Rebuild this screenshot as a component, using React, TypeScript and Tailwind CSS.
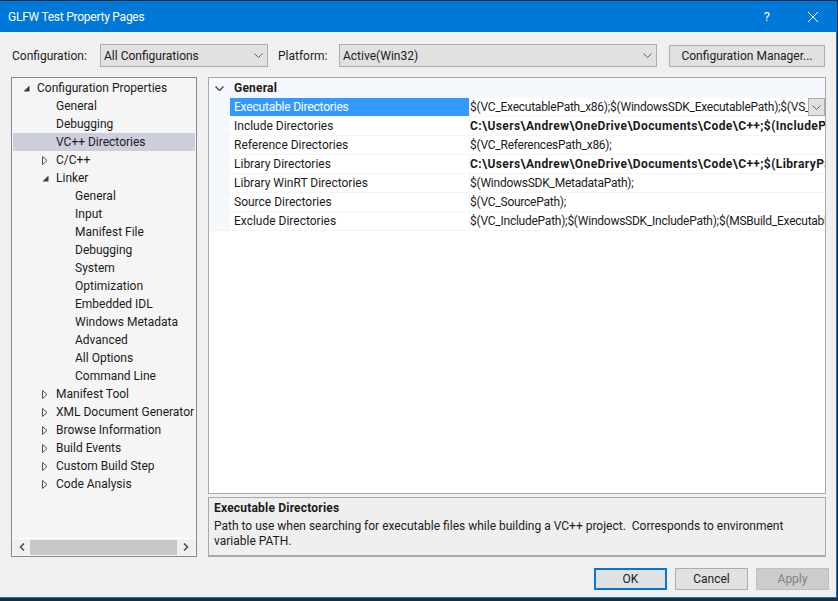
import React from 'react';

type Node = { label: string; depth: number; arrow?: 'open' | 'closed'; selected?: boolean };

const tree: Node[] = [
  { label: 'Configuration Properties', depth: 0, arrow: 'open' },
  { label: 'General', depth: 1 },
  { label: 'Debugging', depth: 1 },
  { label: 'VC++ Directories', depth: 1, selected: true },
  { label: 'C/C++', depth: 1, arrow: 'closed' },
  { label: 'Linker', depth: 1, arrow: 'open' },
  { label: 'General', depth: 2 },
  { label: 'Input', depth: 2 },
  { label: 'Manifest File', depth: 2 },
  { label: 'Debugging', depth: 2 },
  { label: 'System', depth: 2 },
  { label: 'Optimization', depth: 2 },
  { label: 'Embedded IDL', depth: 2 },
  { label: 'Windows Metadata', depth: 2 },
  { label: 'Advanced', depth: 2 },
  { label: 'All Options', depth: 2 },
  { label: 'Command Line', depth: 2 },
  { label: 'Manifest Tool', depth: 1, arrow: 'closed' },
  { label: 'XML Document Generator', depth: 1, arrow: 'closed' },
  { label: 'Browse Information', depth: 1, arrow: 'closed' },
  { label: 'Build Events', depth: 1, arrow: 'closed' },
  { label: 'Custom Build Step', depth: 1, arrow: 'closed' },
  { label: 'Code Analysis', depth: 1, arrow: 'closed' },
];

const props = [
  { name: 'Executable Directories', value: '$(VC_ExecutablePath_x86);$(WindowsSDK_ExecutablePath);$(VS_ExecutablePath);$(Path)', selected: true },
  { name: 'Include Directories', value: 'C:\\Users\\Andrew\\OneDrive\\Documents\\Code\\C++;$(IncludePath)', bold: true },
  { name: 'Reference Directories', value: '$(VC_ReferencesPath_x86);' },
  { name: 'Library Directories', value: 'C:\\Users\\Andrew\\OneDrive\\Documents\\Code\\C++;$(LibraryPath)', bold: true },
  { name: 'Library WinRT Directories', value: '$(WindowsSDK_MetadataPath);' },
  { name: 'Source Directories', value: '$(VC_SourcePath);' },
  { name: 'Exclude Directories', value: '$(VC_IncludePath);$(WindowsSDK_IncludePath);$(MSBuild_ExecutablePath);$(VC_LibraryPath_x86)' },
];

const Chevron = ({ w = 9, thick = false }: { w?: number; thick?: boolean }) => (
  <svg width={w} height={(w + 1) / 2} viewBox={`0 0 ${w} ${(w + 1) / 2}`} fill="none" stroke={thick ? '#505050' : '#606060'} strokeWidth={thick ? 1.5 : 1}>
    <path d={`M0.5 0.5 L${w / 2} ${w / 2} L${w - 0.5} 0.5`} />
  </svg>
);

const TreeArrow = ({ kind }: { kind: 'open' | 'closed' }) =>
  kind === 'open' ? (
    <svg width="7" height="7" viewBox="0 0 7 7"><path d="M6.5 0.5 V6.5 H0.5 Z" fill="#3c3c3c" /></svg>
  ) : (
    <svg width="6" height="9" viewBox="0 0 6 9" fill="none" stroke="#505050"><path d="M0.5 0.5 L5 4.5 L0.5 8.5 Z" /></svg>
  );

const Combo = ({ text, className }: { text: string; className: string }) => (
  <div className={`flex h-[23px] items-center justify-between border border-[#acacac] bg-[#e1e1e1] pl-[3px] pr-[4px] ${className}`}>
    <span>{text}</span>
    <Chevron />
  </div>
);

const Btn = ({ children, className }: { children: React.ReactNode; className: string }) => (
  <div className={`flex h-[22px] w-[73px] items-center justify-center ${className}`}>{children}</div>
);

export default function App() {
  return (
    <div className="flex h-[601px] w-[838px] flex-col overflow-hidden bg-[#1c2b3a] text-[12px] leading-[18px] text-[#1b1b1b]" style={{ fontFamily: 'Roboto, sans-serif' }}>
      <div className="h-px bg-[#1c2b3a]" />
      <div className="mr-[1px] flex h-[597px] flex-col border-r border-b border-[#0078d7] bg-[#f0f0f0]">
        {/* Title bar */}
        <div className="flex h-[31px] shrink-0 items-center justify-between bg-[#0078d7] pl-2 text-white">
          <span className="tracking-[-0.25px]">GLFW Test Property Pages</span>
          <div className="flex items-center">
            <span className="text-[13px]">?</span>
            <svg width="12" height="12" viewBox="0 0 12 12" stroke="#fff" strokeWidth="1" className="mr-[17px] ml-[37px]">
              <path d="M1 1 L11 11 M11 1 L1 11" />
            </svg>
          </div>
        </div>

        {/* Configuration row */}
        <div className="mt-[12px] flex h-[23px] shrink-0 items-center pl-3">
          <span className="w-[88px]">Configuration:</span>
          <Combo text="All Configurations" className="w-[168px]" />
          <span className="ml-[10px] w-[61px]">Platform:</span>
          <Combo text="Active(Win32)" className="w-[318px]" />
          <div className="ml-[12px] flex h-[22px] w-[156px] items-center justify-center border border-[#adadad] bg-[#e1e1e1]">Configuration Manager...</div>
        </div>

        {/* Panels */}
        <div className="mt-[10px] flex h-[480px] shrink-0 pl-[11px]">
          <div className="flex w-[186px] flex-col border border-[#828790] bg-[#f5f5f5] p-px">
            <div className="flex-1">
              {tree.map((n, i) => (
                <div key={i} className={`relative flex h-[18px] items-center whitespace-nowrap ${n.selected ? 'bg-[#cccedb]' : ''} ${n.depth === 0 ? 'pl-[24px]' : n.depth === 1 ? 'pl-[43px]' : 'pl-[62px]'}`}>
                  {n.arrow && (
                    <span className={`absolute flex w-[8px] items-center justify-center ${n.depth === 0 ? 'left-[9px]' : 'left-[28px]'}`}>
                      <TreeArrow kind={n.arrow} />
                    </span>
                  )}
                  {n.label}
                </div>
              ))}
            </div>
            <div className="flex h-[17px] items-center border-t border-white bg-[#f0f0f0]">
              <span className="flex w-[17px] justify-center">
                <svg width="6" height="8" viewBox="0 0 6 8" fill="none" stroke="#505050" strokeWidth="1.6"><path d="M5 0.5 L1.5 4 L5 7.5" /></svg>
              </span>
              <div className="h-[15px] w-[147px] bg-[#c8c8c8]" />
              <span className="flex w-[18px] justify-center">
                <svg width="6" height="8" viewBox="0 0 6 8" fill="none" stroke="#505050" strokeWidth="1.6"><path d="M1 0.5 L4.5 4 L1 7.5" /></svg>
              </span>
            </div>
          </div>

          <div className="ml-[11px] flex w-[618px] flex-col">
            <div className="h-[417px] overflow-hidden border border-[#a9a9a9] bg-white">
              <div className="flex h-[20px] items-center bg-[#f5f8fc]">
                <span className="flex w-[21px] items-center justify-center"><Chevron thick /></span>
                <span className="pl-1 font-bold tracking-[0.2px]">General</span>
              </div>
              {props.map((p) => (
                <div key={p.name} className="flex h-[19px] border-b border-[#f3f5f9] bg-[#f5f8fc]">
                  <div className={`ml-[21px] w-[239px] shrink-0 pl-1 ${p.selected ? 'bg-[#3399ff] tracking-[-0.2px] text-white' : 'bg-white'}`}>{p.name}</div>
                  <div className="relative min-w-0 flex-1 overflow-hidden whitespace-nowrap border-l border-[#f3f5f9] bg-white">
                    <span className={p.bold ? 'font-bold tracking-[0.4px]' : 'tracking-[-0.25px]'}>{p.value}</span>
                    {p.selected && (
                      <span className="absolute top-0 right-0 flex h-[18px] w-[17px] items-center justify-center border border-[#acacac] bg-[#e1e1e1]">
                        <Chevron />
                      </span>
                    )}
                  </div>
                </div>
              ))}
            </div>
            <div className="mt-[3px] h-[60px] border border-b-2 border-[#a9a9a9] bg-[#efefef] pl-[5px] pt-[1px] leading-[15px]">
              <div className="mb-[2px] font-bold leading-[18px] tracking-[0.2px]">Executable Directories</div>
              <div className="w-[590px]">Path to use when searching for executable files while building a VC++ project.&nbsp; Corresponds to environment variable PATH.</div>
            </div>
          </div>
        </div>

        {/* Buttons */}
        <div className="mt-[11px] flex shrink-0 justify-end gap-[8px] pr-[7px]">
          <Btn className="border-2 border-[#0078d7] bg-[#e1e1e1]">OK</Btn>
          <Btn className="border border-[#adadad] bg-[#e1e1e1]">Cancel</Btn>
          <Btn className="border border-[#bfbfbf] bg-[#cccccc] text-[#838383]">Apply</Btn>
        </div>
      </div>
    </div>
  );
}
